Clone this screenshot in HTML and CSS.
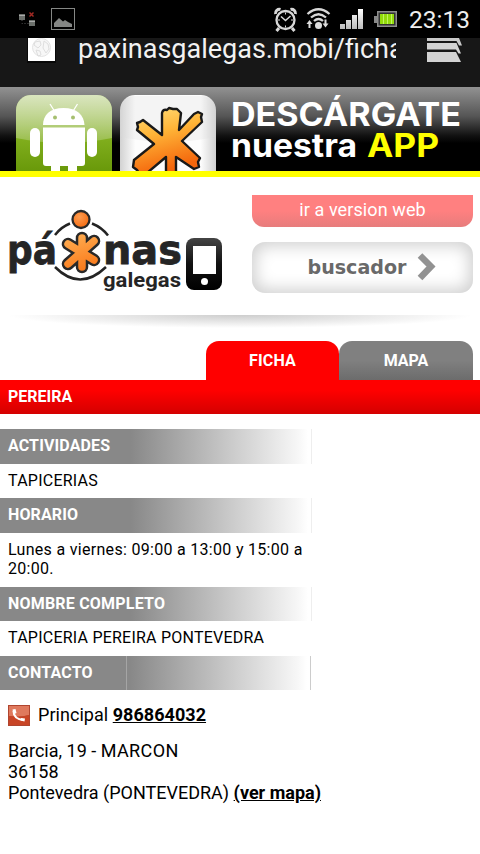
FILE: index.html
```html
<!DOCTYPE html>
<html lang="es">
<head>
<meta charset="utf-8">
<meta name="viewport" content="width=device-width">
<title>Páxinas Galegas</title>
<link rel="stylesheet" href="styles.css">
</head>
<body>
<svg class="defs" width="0" height="0" aria-hidden="true">
  <defs>
    <linearGradient id="orange" x1="0" y1="0" x2="0.3" y2="1"><stop offset="0" stop-color="#ffe07c"/><stop offset="0.45" stop-color="#ffb437"/><stop offset="1" stop-color="#f4660c"/></linearGradient>
    <linearGradient id="limb" gradientUnits="userSpaceOnUse" x1="74" y1="233" x2="88" y2="273"><stop offset="0" stop-color="#ffae52"/><stop offset="1" stop-color="#f97516"/></linearGradient>
    <linearGradient id="silver" x1="0" y1="0" x2="0" y2="1"><stop offset="0" stop-color="#fff"/><stop offset="1" stop-color="#bbb"/></linearGradient>
    <linearGradient id="green" x1="0" y1="0" x2="0" y2="1"><stop offset="0" stop-color="#a2bf5e"/><stop offset="0.6" stop-color="#7fad1c"/><stop offset="1" stop-color="#69990a"/></linearGradient>
    <linearGradient id="gloss" x1="0" y1="0" x2="0" y2="1"><stop offset="0" stop-color="#fff" stop-opacity="0.6"/><stop offset="1" stop-color="#fff" stop-opacity="0.2"/></linearGradient>
    <linearGradient id="tile" x1="0" y1="0" x2="1" y2="0"><stop offset="0" stop-color="#d2d2d2"/><stop offset="0.16" stop-color="#fdfdfd"/><stop offset="0.84" stop-color="#fdfdfd"/><stop offset="1" stop-color="#d0d0d0"/></linearGradient>
    <linearGradient id="device" x1="0" y1="0" x2="0" y2="1"><stop offset="0" stop-color="#444"/><stop offset="0.5" stop-color="#111"/><stop offset="1" stop-color="#000"/></linearGradient>
    <radialGradient id="head" cx="0.4" cy="0.35" r="0.7"><stop offset="0" stop-color="#ff9d50"/><stop offset="1" stop-color="#f4690f"/></radialGradient>
    <clipPath id="greenTile"><path d="M16 84V23a15 15 0 0 1 15-15h66a15 15 0 0 1 15 15v61z"/></clipPath>
  </defs>
</svg>

<div class="status">
  <svg class="status-left" width="90" height="38" viewBox="0 0 90 38">
    <path d="M19 14h6v6h-6zM29 20h6v6h-6z" fill="#6c706c"/>
    <path d="M19 15.500h6M29 21.500h6" stroke="#aaa"/>
    <path d="M22 20v3.500h7" fill="none" stroke="#555" stroke-dasharray="1 2"/>
    <path d="M29.500 12.500l4 4m0-4l-4 4" stroke="#a22a24" stroke-width="1.500"/>
    <rect x="51.500" y="8.500" width="23" height="21" fill="none" stroke="#858785"/>
    <path d="M54 27v-4l5-5 4 3.500 2-1.500 3 2 4 2v3z" fill="#858785"/>
  </svg>
  <svg class="status-right" width="140" height="38" viewBox="270 0 140 38">
    <g fill="none" stroke="#d8d8d8" stroke-width="2.300">
      <circle cx="285.500" cy="20" r="9"/>
      <path d="M275.500 14a4 4 0 0 1 5-4.500M295.500 14a4 4 0 0 0-5-4.500M279 28l-2.500 3M292 28l2.500 3" stroke-width="3"/>
      <path d="M281 16.500l4.500 4 5-4.500" stroke-width="1.500"/>
      <path d="M285.500 12.500v2M285.500 25.500v2M278 20h2M291 20h2" stroke-width="1"/>
      <path d="M307.500 14q11-9.500 22 0M311 17.500q7.500-6.500 15 0M314 21q4.500-4 9 0"/>
    </g>
    <circle cx="318.500" cy="25.500" r="3.500" fill="#ddd"/>
    <path d="M306.500 24l3-4 3 4h-2v4h-2v-4zM322.500 23.500h2v-4h2v4h2l-3 4z" fill="#ddd"/>
    <path d="M340 24h5v5h-5zM346 20h5v9h-5zM352 15h5v14h-5zM358 9h5v20h-5z" fill="url(#silver)"/>
    <path d="M374 16h3v7h-3z" fill="#888"/>
    <rect x="377" y="11" width="20" height="16" fill="#8d8d8d"/>
    <rect x="378.500" y="12.500" width="17" height="13" fill="#333"/>
    <rect x="380" y="14" width="14" height="10" fill="#93dc0b"/>
    <path d="M383.500 14v10M387.500 14v10M391.500 14v10" stroke="#c1f560"/>
  </svg>
  <span class="clock">23:13</span>
</div>

<div class="browser">
  <svg class="favicon" width="29" height="25" viewBox="0 0 29 25">
    <path d="M0 0h30v25H0z" fill="#080808"/><path d="M1 0h27v23H1z" fill="#fff"/>
    <circle cx="14.500" cy="9.500" r="9" fill="#f7f7f7" stroke="#e4e4e4"/>
    <path d="M8 4l5-1 1 4-3 3-4-3zM17 3l4 3 1 5-3 4-3-5zM9 12l4 1 1 4-3 1z" fill="none" stroke="#dedede"/>
  </svg>
  <div class="url"><span>paxinasgalegas.mobi/ficha</span></div>
  <svg class="tabs-icon" width="36" height="25" viewBox="0 0 36 25">
    <path d="M0 0h32l3 7.500h-3L29.500 3H0z" fill="#c9c9c9"/>
    <path d="M0 5h29.500l4.500 10.500h-2.500L29 11.500H0z" fill="#d3d3d3"/>
    <path d="M0 14h29l5 10H0z" fill="#d3d3d3"/>
  </svg>
</div>

<svg class="banner" width="480" height="84" viewBox="0 0 480 84">
  <g clip-path="url(#greenTile)">
    <path d="M16 8h96v76H16z" fill="url(#green)"/>
    <path d="M16 8h96v43q-48 10-96 0z" fill="url(#gloss)"/>
  </g>
  <g fill="#fff">
    <path d="M43 38c0-10 7-17 20.500-17S84 28 84.500 38z"/>
    <path d="M43 40.500h42V76q0 3-3 3h-5v5h-9v-5h-8v5h-9v-5h-5q-3 0-3-3z"/>
    <rect x="30" y="41" width="10" height="29" rx="5"/><rect x="87" y="41" width="10" height="29" rx="5"/>
    <path d="M50 17l5 8M77.500 17l-5 8" stroke="#fff" stroke-width="1.300"/>
  </g>
  <circle cx="55" cy="30.500" r="2" fill="#a6bf70"/><circle cx="73" cy="30.500" r="2" fill="#a6bf70"/>
  <path d="M120 84V23a15 15 0 0 1 15-15h66a15 15 0 0 1 15 15v61z" fill="url(#tile)"/>
  <path d="M121 50V24a15 15 0 0 1 15-15h64a15 15 0 0 1 15 15v26q-47 10-94 0z" fill="#ddd" opacity="0.25"/>
  <path d="M162 48L162 26Q163 22 167 23L169 21 173 22 177 22 181 26 179 43 194 27 198 25 202 27 201 30 202 35 182 54 200 71 198 75 199 80 194 82 176 70V86H166V70L147 86 139 86 137 83 133 80 134 73 154 57 137 43 138 40 137 36 140 35 143 33z" fill="url(#orange)" stroke="#191919" stroke-width="2.400" stroke-linejoin="round"/>
  <g class="banner-text">
    <text x="231" y="38.500" textLength="230" lengthAdjust="spacingAndGlyphs" font-size="32">DESCÁRGATE</text>
    <text x="231" y="70" textLength="126" lengthAdjust="spacingAndGlyphs" font-size="32">nuestra</text>
    <text class="yellow" x="367" y="70" textLength="72" lengthAdjust="spacingAndGlyphs" font-size="32">APP</text>
  </g>
</svg>

<header class="header">
  <svg class="logo" width="220" height="90" viewBox="4 207 220 90">
    <path d="M55 235q6-8 15-11.500M92 223.500q10 4 16 12M55 267q25 25 51 0" fill="none" stroke="#242424" stroke-width="2.500"/>
    <g class="wordmark">
      <text x="7" y="263.500" textLength="50" lengthAdjust="spacingAndGlyphs" font-size="41">pá</text>
      <text x="103" y="263.500" textLength="79" lengthAdjust="spacingAndGlyphs" font-size="41">nas</text>
      <text class="thin" x="103" y="286.500" textLength="78" lengthAdjust="spacingAndGlyphs" font-size="21">galegas</text>
    </g>
    <g fill="none" stroke-linecap="round">
      <path d="M82 238V267M68 244L93 259M94 241L69 264" stroke="#fff" stroke-width="16"/>
      <path d="M82 238V267M68 244L94 260M94 241L68 264" stroke="#292929" stroke-width="12.500"/>
      <path d="M82 238V267M68 244L94 260M94 241L68 264" stroke="url(#limb)" stroke-width="7.500"/>
    </g>
    <circle cx="81" cy="219.500" r="8.500" fill="url(#head)" stroke="#292929" stroke-width="2.300"/>
    <rect x="186" y="238" width="36" height="52" rx="8" fill="url(#device)"/>
    <path d="M193 246h23v28h-23z" fill="#fff"/><circle cx="204.500" cy="281.500" r="3.500" fill="#fff"/>
  </svg>
  <div class="actions">
    <a class="version">ir a version web</a>
    <a class="search">
      <svg width="140" height="34" viewBox="304 249 140 34">
        <text x="307.500" y="273.500" textLength="99" lengthAdjust="spacingAndGlyphs">buscador</text>
        <path d="M420 255.500L431 266.500l-11 11.500" fill="none" stroke="#929292" stroke-width="6.500"/>
      </svg>
    </a>
  </div>
</header>
<svg class="divider" width="480" height="16" viewBox="0 0 480 16">
  <defs><radialGradient id="fade" gradientUnits="userSpaceOnUse" cx="0" cy="0" r="1" gradientTransform="translate(240 0) scale(232 13)"><stop offset="0" stop-color="#cdcdcd"/><stop offset="1" stop-color="#fff"/></radialGradient></defs>
  <path d="M8 0H472V14H8z" fill="url(#fade)"/>
</svg>

<nav class="tabs"><a class="tab active">FICHA</a><a class="tab">MAPA</a></nav>
<h1 class="title">PEREIRA</h1>

<main>
  <h2>ACTIVIDADES</h2>
  <p>TAPICERIAS</p>
  <h2>HORARIO</h2>
  <p class="hours">Lunes a viernes: 09:00 a 13:00 y 15:00 a<br>20:00.</p>
  <h2 class="short">NOMBRE COMPLETO</h2>
  <p class="name">TAPICERIA PEREIRA PONTEVEDRA</p>
  <h2 class="short contact">CONTACTO</h2>
  <div class="phone">
    <svg width="22" height="21" viewBox="0 0 22 21">
      <path d="M0 0h22v21H0z" fill="#b0452f"/><path d="M1 1h20v9q-9 3-20 1z" fill="#df795d"/><path d="M1 11q11 2 20-1v10H1z" fill="#c84526"/>
      <path d="M5.500 6q0 8 10 9" fill="none" stroke="#fff" stroke-width="2"/><path d="M4.500 4.500l3-.5 1 4-3 1.500zM13 13l4 .5-.5 3-4-1z" fill="#fff"/>
    </svg>
    <span>Principal <a>986864032</a></span>
  </div>
  <address>Barcia, 19 - <span class="town">MARCON</span><br>36158<br>Pontevedra (PONTEVEDRA) <a>(ver mapa)</a></address>
</main>
</body>
</html>
```
FILE: styles.css
```css
* { box-sizing: border-box; }
body { margin: 0; width: 480px; height: 854px; overflow: hidden; background: #fff; color: #000; font: 16px/19px Roboto, sans-serif; }
svg { display: block; flex: none; }
.defs { position: absolute; }
.status { height: 38px; background: #000; display: flex; }
.status-right { margin-left: 180px; }
.clock { margin-left: -1px; color: #eee; font-size: 24.5px; line-height: 39px; }
.browser { height: 49px; background: #171717; display: flex; padding-left: 27px; }
.url { width: 318px; height: 35px; margin-left: 22px; overflow: hidden; color: #f2f2f2; font-size: 27px; line-height: 23px; white-space: nowrap; }
.tabs-icon { margin-left: 31px; }
.banner { background: linear-gradient(#929292, #555 35%, #111 58%, #000 67%); }
.banner-text { font-family: Inter, sans-serif; font-weight: 700; fill: #fff; }
.banner-text .yellow { fill: #ff0; }
.header { border-top: 6px solid #ff0; height: 144px; padding-left: 4px; display: flex; }
.logo { margin-top: 30px; }
.wordmark { font-family: "DejaVu Sans", sans-serif; font-weight: 700; fill: #252525; stroke: #252525; stroke-width: .8px; }
.wordmark .thin { font-family: Roboto, sans-serif; stroke-width: 0; }
.actions { width: 221px; margin: 18px 0 0 28px; display: flex; flex-direction: column; gap: 15px; }
.version { height: 32px; border-radius: 0 0 12px 12px; background: linear-gradient(#ff8080 50%, #e77c7c); color: #fff; text-align: center; font-size: 18px; letter-spacing: .1px; line-height: 30px; }
.search { height: 51px; border-radius: 13px; background: #fff; box-shadow: inset 0 0 16px 4px #d0d0d0; padding: 7px 0 0 52px; }
.search text { font: 700 20px "DejaVu Sans", sans-serif; fill: #696969; }
.tabs { height: 49px; padding: 10px 7px 0 206px; display: flex; }
.tab { width: 133px; border-radius: 13px 13px 0 0; background: linear-gradient(#808080 50%, #6c6c6c); color: #fff; font-weight: 700; line-height: 39px; text-align: center; }
.tab + .tab { width: 134px; }
.tab.active { background: red; letter-spacing: .2px; }
.title { margin: 0; height: 34px; padding-left: 8px; background: linear-gradient(#f00 30%, #d40000); color: #fff; font-size: 16px; line-height: 33px; }
main { padding-top: 15px; }
h2 { width: 312px; height: 35px; margin: 0; padding-left: 8px; color: #fff; font-size: 16px; line-height: 33px; letter-spacing: .12px; background: linear-gradient(90deg, #888 42%, #f7f7f7 96%, #fff 99%); border-right: 1px solid #eee; }
h2.short { height: 34px; letter-spacing: .2px; }
h2.contact { width: 311px; border-color: #ccc; background: linear-gradient(#a5a5a5, #a5a5a5) 126px 0 / 1px 100% no-repeat, linear-gradient(90deg, #888 42%, #f7f7f7 96%, #fff 99%); }
p { margin: 0; height: 34px; padding: 7px 8px 0; letter-spacing: .23px; }
.hours { height: 54px; letter-spacing: .3px; white-space: nowrap; }
.name { height: 35px; }
.phone { height: 35px; margin: 15px 0 0 8px; display: flex; gap: 8px; font-size: 18px; line-height: 20px; letter-spacing: .04px; }
address { margin-left: 8px; font-size: 18px; line-height: 21px; font-style: normal; white-space: nowrap; }
.town { letter-spacing: .4px; }
main a { font-weight: 700; text-decoration: underline; }
```
